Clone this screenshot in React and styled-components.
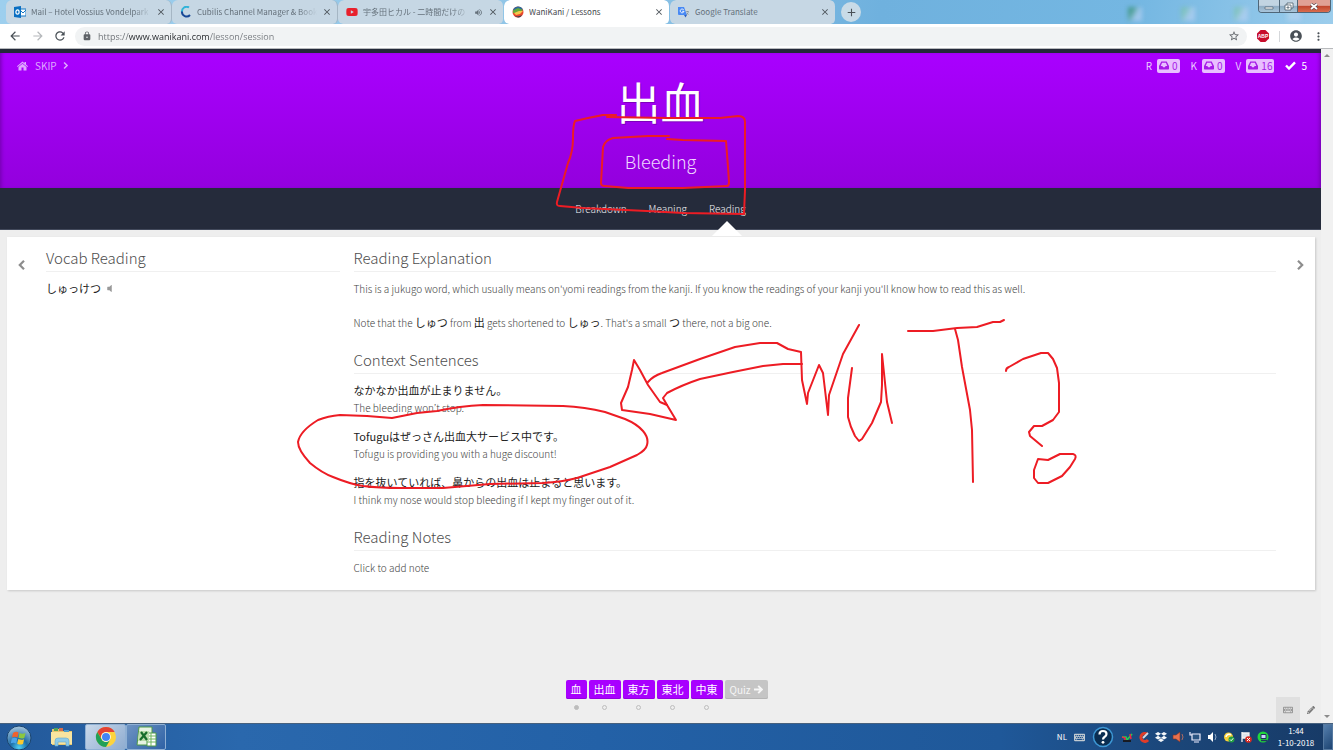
import React from "react";
import styled, { createGlobalStyle } from "styled-components";
import {
  FaVolumeOff, FaKeyboard, FaPencilAlt, FaDropbox, FaYoutube,
} from "react-icons/fa";
import {
  MdArrowBack, MdArrowForward, MdRefresh, MdLock, MdStarBorder,
  MdAccountCircle, MdMoreVert, MdClose, MdAdd, MdVolumeUp,
} from "react-icons/md";

const uiFont = '"Open Sans", "Noto Sans CJK JP", sans-serif';
const siteFont = '"Noto Sans CJK JP", sans-serif';

const GlobalStyle = createGlobalStyle`
  * { box-sizing: border-box; }
  body { margin: 0; background: #eee; }
  button { border: 0; padding: 0; background: none; font: inherit; color: inherit; cursor: pointer; }
  a { color: inherit; text-decoration: none; }
  h1, h2, p { margin: 0; font-weight: inherit; }
  svg { display: block; flex: none; }
`;

const Screen = styled.div`
  position: relative;
  display: flex;
  flex-direction: column;
  min-height: 100vh;
  font-family: ${siteFont};
  font-weight: 300;
`;

/* ---- browser ---- */

const TabStrip = styled.div`
  position: relative;
  display: flex;
  height: 24px;
  padding-left: 6px;
  background: linear-gradient(100deg, #9dcfee 0, #8fc4e6 45%, #6fb1de 66%, #74b7e2 85%, #9ccdec 100%);
  font: 8px/24px ${siteFont};
`;
const Tab = styled.div`
  display: flex;
  align-items: center;
  flex: 0 1 166px;
  min-width: 0;
  gap: 5px;
  padding: 0 5px 0 8px;
  border-radius: 6px 6px 5px 5px;
  background: ${(p) => (p.$active ? "#fff" : "#c6d7e4")};
  color: ${(p) => (p.$active ? "#45494d" : "#65717b")};
  border-right: 1px solid ${(p) => (p.$line ? "#a5b6c4" : "transparent")};
  background-clip: padding-box;
`;
const TabTitle = styled.button`
  flex: 1;
  min-width: 0;
  overflow: hidden;
  white-space: nowrap;
  text-align: left;
  ${(p) => p.$fade && "mask-image: linear-gradient(90deg, #000 85%, transparent);"}
`;
const IconButton = styled.button`
  display: grid;
  place-items: center;
  flex: none;
  width: ${(p) => p.$w || 10}px;
  height: ${(p) => p.$h || 20}px;
  color: ${(p) => p.$color || "#4a5157"};
`;
const NewTab = styled(IconButton)`
  align-self: center;
  margin-left: 5px;
  border-radius: 50%;
  background: #c9dbe7;
`;
const DesktopGhosts = styled.div`
  display: flex;
  align-items: center;
  gap: 39px;
  margin-left: auto;
  padding: 4px 32px 0 0;
  filter: blur(2px);
`;
const Ghost = styled.span`
  width: 14px;
  height: 14px;
  background: linear-gradient(120deg, ${(p) => p.$c} 25%, #bcd3f4 60%);
  opacity: 0.6;
`;
const WindowControls = styled.div`
  position: absolute;
  top: 0;
  right: 2px;
  display: flex;
  height: 13px;
  border: 1px solid #4f6678;
  border-top: 0;
  border-radius: 0 0 4px 4px;
  overflow: hidden;
`;
const WindowButton = styled.button`
  display: grid;
  place-items: center;
  width: ${(p) => p.$w}px;
  border-left: ${(p) => (p.$first ? "0" : "1px solid #4f6678")};
  background: ${(p) => (p.$close
    ? "linear-gradient(#e0a094 0 45%, #c0442b 50%, #d96d4e)"
    : "linear-gradient(#c2d4e2 0 45%, #8eabc2 50%, #a9c5db)")};
`;

const Toolbar = styled.div`
  display: flex;
  align-items: center;
  height: 25px;
  padding: 0 4px;
  background: #fff;
  border-bottom: 1px solid #b8babd;
`;
const AddressBar = styled.label`
  display: flex;
  align-items: center;
  flex: 1;
  height: 19px;
  margin: 0 8px 0 4px;
  padding: 0 7px;
  gap: 6px;
  border-radius: 10px;
  background: #f1f3f4;
  color: #5f6368;
`;
const Address = styled.input`
  flex: 1;
  min-width: 0;
  height: 19px;
  padding: 0;
  border: 0;
  outline: 0;
  font: 9px/19px ${uiFont};
  color: transparent;
  background: linear-gradient(90deg, #6a6e73 31px, #25282c 31px 112px, #74787d 112px);
  background-clip: text;
  -webkit-background-clip: text;
`;
const Abp = styled.span`
  width: 12px;
  height: 12px;
  clip-path: polygon(30% 0, 70% 0, 100% 30%, 100% 70%, 70% 100%, 30% 100%, 0 70%, 0 30%);
  background: #c70d2c;
  color: #fff;
  font: bold 5px/12px "Liberation Sans", sans-serif;
  text-align: center;
`;
const Divider = styled.span`
  width: 1px;
  height: 11px;
  margin: 0 5px 0 8px;
  background: #d5d7da;
`;

/* ---- page ---- */

const Viewport = styled.div`
  display: flex;
  flex: 1;
`;
const Page = styled.div`
  display: flex;
  flex-direction: column;
  flex: 1;
  min-width: 0;
  border-top: 4px solid #232939;
  background: #eee;
`;
const ScrollTrack = styled.div`
  display: flex;
  flex-direction: column;
  justify-content: space-between;
  align-items: center;
  width: 12px;
  padding: 5px 0;
  background: #f1f1f1;
`;
const ScrollArrow = styled.span`
  border: 3px solid transparent;
  border-top-width: ${(p) => (p.$up ? 0 : 3)}px;
  border-bottom-width: ${(p) => (p.$up ? 3 : 0)}px;
  border-${(p) => (p.$up ? "bottom" : "top")}-color: #8b8b8b;
`;
const Header = styled.header`
  height: 135px;
  background: linear-gradient(#a900ff, #9300dd);
  box-shadow: inset 4px 0 4px -3px #6f00a8, inset -4px 0 4px -3px #6f00a8;
  color: #fff;
  text-align: center;
`;
const HeaderBar = styled.div`
  display: flex;
  justify-content: space-between;
  height: 25px;
  padding: 0 14px 0 17px;
  font: 10px/25px ${siteFont};
  color: #dfa8ff;
`;
const Row = styled.div`
  display: flex;
  align-items: center;
  gap: ${(p) => p.$gap}px;
`;
const Skip = styled.a`
  display: flex;
  align-items: center;
  gap: 5px;
`;
const Stat = styled.span`
  display: flex;
  align-items: center;
  gap: 5px;
  color: ${(p) => (p.$bright ? "#fff" : "#ecccff")};
`;
const StatCount = styled.span`
  display: flex;
  align-items: center;
  gap: 3px;
  height: 14px;
  padding: 0 2px;
  border-radius: 2px;
  background: #e8bfff;
  color: #a61be8;
  line-height: 14px;
`;
const Word = styled.h1`
  font-size: 44px;
  font-weight: 400;
  line-height: 46px;
  text-shadow: 1px 1px 0 #7d00bd;
`;
const Meaning = styled.p`
  padding-top: 22px;
  font-size: 18px;
  line-height: 30px;
  color: #f0d8ff;
`;
const Steps = styled.nav`
  display: flex;
  justify-content: center;
  gap: 22px;
  height: 42px;
  background: #252b3b;
  border-bottom: 1px solid #42495b;
  font-size: 10px;
  line-height: 42px;
  color: #f0f1f3;
`;
const Step = styled.a`
  position: relative;
  ${(p) => p.$current && `
    &::after {
      content: "";
      position: absolute;
      left: 50%;
      bottom: -7px;
      border: 15px solid transparent;
      border-top: 0;
      border-bottom-color: #fff;
      translate: -50% 0;
    }
  `}
`;
const Card = styled.main`
  display: flex;
  align-items: flex-start;
  margin: 7px 6px 0 7px;
  padding: 8px 0 13px;
  background: #fff;
  box-shadow: 1px 1px 2px #c8c8c8;
  color: #444;
  font-size: 10px;
  line-height: 18px;
`;
const Pager = styled.button`
  display: grid;
  place-items: center;
  flex: none;
  width: 39px;
  height: 40px;
  padding-right: ${(p) => (p.$next ? 0 : 9)}px;
  padding-left: ${(p) => (p.$next ? 9 : 0)}px;
  color: #8d8d8d;
`;
const Columns = styled.div`
  display: grid;
  grid-template-columns: 7fr 22fr;
  gap: 14px;
  flex: 1;
`;
const Section = styled.section`
  & + & { margin-top: 15px; }
`;
const Title = styled.h2`
  margin-bottom: 8px;
  border-bottom: 1px solid #f0f0f0;
  font-size: 15px;
  line-height: 26px;
  color: #4d4d4d;
`;
const Paragraph = styled.p`
  & + & { margin-top: 16px; }
`;
const Japanese = styled.span`
  font-size: 11px;
  font-weight: 400;
  line-height: 11px;
  color: #222;
`;
const Reading = styled.p`
  display: flex;
  align-items: center;
  gap: 4px;
  color: #222;
  font-size: 11px;
  font-weight: 400;
  line-height: 16px;
`;
const Sentence = styled.div`
  & + & { margin-top: 11px; }
`;
const SentenceJa = styled.p`
  font-size: 11px;
  font-weight: 400;
  line-height: 17px;
  color: #222;
`;
const Footer = styled.footer`
  display: grid;
  grid-template-columns: 1fr auto 1fr;
  align-items: end;
  margin-top: auto;
  padding-left: 12px;
`;
const Lessons = styled.div`
  grid-column: 2;
  display: flex;
  align-items: flex-start;
  gap: 2px;
  padding-bottom: 13px;
`;
const Lesson = styled.div`
  display: flex;
  flex-direction: column;
  align-items: center;
  gap: 6px;
`;
const LessonButton = styled.button`
  display: flex;
  align-items: center;
  gap: 3px;
  height: 19px;
  padding: 0 5px;
  border-radius: 2px;
  background: ${(p) => (p.$quiz ? "#c5c5c5" : "#a800ff")};
  box-shadow: inset 0 -1px 0 ${(p) => (p.$quiz ? "#b5b5b5" : "#9300dd")};
  color: ${(p) => (p.$quiz ? "#f6f6f6" : "#fff")};
  font-size: ${(p) => (p.$quiz ? 10 : 11)}px;
  font-weight: 400;
  line-height: 19px;
`;
const Dot = styled.span`
  width: 5px;
  height: 5px;
  border: 1px solid #bdbdbd;
  border-radius: 50%;
  background: ${(p) => (p.$on ? "#bdbdbd" : "transparent")};
`;
const Tools = styled.div`
  display: flex;
  justify-content: flex-end;
  color: #888;
`;
const Tool = styled(IconButton)`
  background: ${(p) => (p.$shade ? "#e0e0e0" : "none")};
`;

/* ---- taskbar ---- */

const Taskbar = styled.div`
  display: flex;
  align-items: center;
  height: 27px;
  border-top: 1px solid #47617e;
  background: linear-gradient(90deg, #23599a, #2a68ad 18%, #2361a7 45%, #1f5899 75%, #1b4679 88%, #173a66);
  color: #fff;
  font: 8px/12px ${siteFont};
`;
const TaskButton = styled.button`
  display: grid;
  place-items: center;
  width: ${(p) => p.$w}px;
  height: 26px;
  border-radius: 2px;
  border: 1px solid ${(p) => (p.$state ? "#8fb0d4" : "transparent")};
  background: ${(p) => ({
    active: "linear-gradient(135deg, #c9d8ea, #8eacd0)",
    open: "linear-gradient(135deg, #6d93c2, #2f62a5)",
  }[p.$state] || "none")};
`;
const Tray = styled.div`
  display: flex;
  align-items: center;
  gap: 7px;
  margin-left: auto;
`;
const Clock = styled.div`
  width: 40px;
  text-align: center;
  white-space: nowrap;
`;
const ShowDesktop = styled.button`
  width: 10px;
  height: 26px;
  border: 1px solid #55789f;
  background: linear-gradient(135deg, #557fad, #1d4472);
`;
const Markup = styled.svg`
  position: absolute;
  inset: 0;
  width: 100%;
  height: 100%;
  pointer-events: none;
  fill: none;
  stroke: #ed1c24;
  stroke-width: 2;
  stroke-linecap: round;
  stroke-linejoin: round;
`;

const Chevron = ({ size, left }) => (
  <svg width={size} height={size} viewBox="0 0 10 10" fill="none" stroke="currentColor" strokeWidth="2.200">
    <path d={left ? "M7 .8 2.800 5 7 9.200" : "M3 .8 7.200 5 3 9.200"} />
  </svg>
);
const HomeIcon = () => (
  <svg width="11" height="10" viewBox="0 0 11 10" fill="currentColor">
    <path d="M5.500.5 7.500 2.200V1H9v2.500L11 5.200l-.6.7-4.900-4-4.900 4L0 5.200z" />
    <path d="m5.500 2.800 4 3.300V9.500H6.500v-3h-2v3h-3V6.100z" />
  </svg>
);
const InboxIcon = () => (
  <svg width="10" height="9" viewBox="0 0 10 9" fill="currentColor" fillRule="evenodd">
    <path d="M2.300.5h5.400L10 5v2.800q0 .7-.7.7H.7q-.7 0-.7-.7V5zM3.100 1.800 1.700 5h1.700l.7 1.300h1.800L6.600 5h1.700L6.900 1.800z" />
  </svg>
);
const CheckIcon = () => (
  <svg width="11" height="9" viewBox="0 0 11 9" fill="none" stroke="currentColor" strokeWidth="2.400">
    <path d="m1 4.500 3 3L10 1.300" />
  </svg>
);
const ArrowIcon = () => (
  <svg width="9" height="9" viewBox="0 0 9 9" fill="none" stroke="currentColor" strokeWidth="1.900">
    <path d="M0 4.500h7.500M4.200.8 7.900 4.500 4.200 8.200" />
  </svg>
);
const OutlookIcon = () => (
  <svg width="12" height="12" viewBox="0 0 12 12">
    <path d="M6 3h6v7H6z" fill="#fff" stroke="#1477c6" />
    <path d="m6 4 3 3 3-3" fill="none" stroke="#1477c6" />
    <path d="M0 1 7 0v12L0 11z" fill="#0a6fc2" />
    <ellipse cx="3.500" cy="6" rx="1.600" ry="2.100" fill="none" stroke="#fff" strokeWidth="1.200" />
  </svg>
);
const CubilisIcon = () => (
  <svg width="12" height="12" viewBox="0 0 12 12" fill="none" strokeWidth="2">
    <path d="M9 1.500A4.600 4.600 0 0 0 2 6" stroke="#31b3d8" />
    <path d="M2 5.500A4.600 4.600 0 0 0 10 9" stroke="#174796" />
  </svg>
);
const WaniIcon = () => (
  <svg width="12" height="12" viewBox="0 0 12 12">
    <circle cx="6" cy="6" r="5.500" fill="#e8452c" />
    <path d="M.8 4.500A5.500 5.500 0 0 1 11 3.500L5 5z" fill="#2c6b9c" />
    <path d="M1 4.500 6 2l5 2-5 3-5 0z" fill="#67a83a" />
    <path d="m2 7 5-2 4 0-3 3-4 1z" fill="#f6c64b" />
    <path d="M2 9.500q4 2 8-.5-2 3-4 2.500T2 9.500" fill="#27425f" />
  </svg>
);
const TranslateIcon = () => (
  <svg width="12" height="12" viewBox="0 0 12 12">
    <path d="M5 3h6v8H7z" fill="#cfd8dd" />
    <path d="M0 1h6l3 8H1q-1 0-1-1z" fill="#4889f4" />
    <path d="m6 9 3 0-1.500 2.500z" fill="#2a5fc4" />
    <path d="M5.800 4A1.900 1.900 0 1 0 6 5.300H4.200" fill="none" stroke="#fff" strokeWidth=".9" />
    <path d="M8 5.500h3M9.500 5v1M10.500 6 8.500 9M8.700 7l2 1.500" stroke="#7b8a92" strokeWidth=".6" />
  </svg>
);
const StartOrb = () => (
  <svg width="26" height="26" viewBox="0 0 26 26">
    <defs>
      <radialGradient id="orb" cx=".5" cy=".9" r=".9">
        <stop offset="0" stopColor="#4fd0f5" /><stop offset=".4" stopColor="#1c6ba6" /><stop offset="1" stopColor="#a9c7de" />
      </radialGradient>
    </defs>
    <circle cx="13" cy="13" r="12" fill="url(#orb)" stroke="#1b4570" />
    <path d="M7 8q3-2 5.500-.5l-1 5Q8.500 11 6 12.500z" fill="#f0622d" />
    <path d="M13.500 8q3 1.500 6 0l-1.200 5q-3 1.200-5.800-.2z" fill="#8cc83f" />
    <path d="M5.800 13.500q3-1.500 5.500 0l-1.200 5Q7.500 17 4.700 18.500z" fill="#4aa5ea" />
    <path d="M12.300 14q3 1.400 5.800.2L17 19q-3 1.300-5.800-.3z" fill="#fcc92e" />
  </svg>
);
const ExplorerIcon = () => (
  <svg width="24" height="22" viewBox="0 0 24 22">
    <path d="M2 3h7l1 2h12v14H2z" fill="#e5c66d" />
    <path d="M4 2h4v3H4z" fill="#52a25c" /><path d="M9 2h4v3H9z" fill="#d56d4d" /><path d="M14 4h5v3h-5z" fill="#4e9bc9" />
    <path d="M1 6h21v12H1z" fill="#f8e4a0" />
    <path d="M5 20v-5q0-3 3-3h8q3 0 3 3v5h-3v-4H8v4z" fill="#8ecbe9" stroke="#62a9cf" strokeWidth=".6" />
  </svg>
);
const ChromeIcon = () => (
  <svg width="22" height="22" viewBox="0 0 22 22">
    <circle cx="11" cy="11" r="10" fill="#fdd33c" />
    <path d="M2.300 6A10 10 0 0 1 19.700 6H11a5 5 0 0 0-4.300 7.500z" fill="#e24234" />
    <path d="M2.300 6A10 10 0 0 0 11 21l4.300-7.500a5 5 0 0 1-8.600 0z" fill="#21a057" />
    <circle cx="11" cy="11" r="4.800" fill="#fff" /><circle cx="11" cy="11" r="4" fill="#4285f4" />
  </svg>
);
const ExcelIcon = () => (
  <svg width="22" height="22" viewBox="0 0 22 22">
    <path d="M4 1h13v18H2z" fill="#e7f3e3" stroke="#4f9a49" />
    <path d="M12 7h9v13h-9z" fill="#fff" stroke="#4f9a49" />
    <path d="M12 10h9M12 13h9M12 16h9M16 7v13" stroke="#6eb45c" />
    <path d="M4 5h10v10H3z" fill="#bcdcac" />
    <path d="m6 6 6 8M12 6l-7 8" stroke="#176c2b" strokeWidth="2.200" />
  </svg>
);
const HelpIcon = () => (
  <svg width="22" height="22" viewBox="0 0 22 22">
    <circle cx="11" cy="11" r="9.500" fill="#0b2e52" stroke="#3d97d4" strokeWidth="1.500" />
    <path d="M7.500 8.500q0-3.500 3.500-3.500t3.500 3q0 1.800-2 3-1.500 1-1.500 2.500" fill="none" stroke="#fff" strokeWidth="2.200" />
    <circle cx="11" cy="16.300" r="1.400" fill="#fff" />
  </svg>
);
const trayIcons = [
  <><path d="M1 6h4l1 3 5-6" fill="none" stroke="#24d04d" strokeWidth="1.600" /><path d="M1 6l3 1v3M9 3l1 5" stroke="#ee2b46" strokeWidth="1.500" fill="none" /><path d="M2 10h8" stroke="#181b22" strokeWidth="2" /></>,
  <><path d="M9 3a4 4 0 1 0 1 6" fill="none" stroke="#e03c28" strokeWidth="3" /><path d="m5 7 5-5" stroke="#d7dbe2" strokeWidth="1.800" /></>,
  null,
  <><path d="M1 4h3l4-3v10L4 8H1z" fill="#e8714d" stroke="#7d2f25" strokeWidth=".6" /><path d="M10 3q2 3 0 6" fill="none" stroke="#b06a60" /></>,
  <><path d="M3 3h8v6H3z" fill="#2b5583" stroke="#eef" strokeWidth="1.200" /><path d="M1 1v3h2M5 11h5" stroke="#eef" strokeWidth="1.200" fill="none" /></>,
  <><path d="M2 4h2l3-3v10L4 8H2z" fill="#fff" /><path d="M9 3q2 3 0 6" fill="none" stroke="#8fa9c8" /></>,
  <><circle cx="5.500" cy="6" r="4.500" fill="#f4cf38" /><path d="M3 6a3 3 0 0 1 5-2" stroke="#fff" fill="none" strokeWidth="1.500" /><circle cx="8.500" cy="8.500" r="3" fill="#24a044" /><path d="m7 8.500 1.200 1.200 2-2.400" stroke="#fff" fill="none" /></>,
  <><path d="M2 1v10M2 2h7v5H2" stroke="#f4f4f4" fill="#dfe5ed" strokeWidth="1.300" /><circle cx="8.500" cy="8.500" r="3.300" fill="#d92a22" /><path d="m7 7 3 3m0-3-3 3" stroke="#fff" /></>,
  <><circle cx="6" cy="6" r="5.500" fill="#20d73c" /><path d="M4 3.500h5v4H4z" fill="#cbd7ff" stroke="#23325f" /><path d="M4 9.500h6" stroke="#23325f" strokeWidth="1.400" /></>,
];

const tabs = [
  { title: "Mail – Hotel Vossius Vondelpark", icon: <OutlookIcon />, fade: true, line: true },
  { title: "Cubilis Channel Manager & Book", icon: <CubilisIcon />, fade: true, line: true },
  { title: "宇多田ヒカル - 二時間だけの", icon: <FaYoutube size={12} color="#e8202c" />, fade: true, sound: true },
  { title: "WaniKani / Lessons", icon: <WaniIcon />, active: true },
  { title: "Google Translate", icon: <TranslateIcon /> },
];
const stats = [["R", 0], ["K", 0], ["V", 16]];
const sentences = [
  ["なかなか出血が止まりません。", "The bleeding won’t stop."],
  ["Tofuguはぜっさん出血大サービス中です。", "Tofugu is providing you with a huge discount!"],
  ["指を抜いていれば、鼻からの出血は止まると思います。", "I think my nose would stop bleeding if I kept my finger out of it."],
];
const lessons = ["血", "出血", "東方", "東北", "中東"];

const strokes = [
  "M616 115H603L588 118 575 121Q573 125 573 138 573 152 568 163L557 202Q556 206 560 206L583 208 647 211 683 213 744 214 745 190 745 122Q745 116 738 116L720 118 667 118 607 117",
  "M669 136 648 136 613 138Q605 140 603 147L602 165 601 183Q601 186 605 186L628 188H683L727 186Q729 186 729 182L728 167 726 141 683 140 667 139",
  "M392 418 367 416 340 415Q328 416 318 420 300 431 298 442 298 450 310 463 322 473 333 477 350 484 363 486 380 488 400 488L443 488 490 484 543 483Q562 482 577 478L610 467 637 455Q646 450 647 445 649 438 643 431 637 424 625 419L605 412Q585 407 563 406L483 405Q460 406 437 411L417 413 392 418",
  "M634 360 640 370 648 385 660 402 667 405 676 420 650 414 622 410 621 403 628 387 632 370Z",
  "M648 382Q653 376 662 373L700 359 735 347 760 343H777L788 349 801 352 802 380 807 404 808 393 819 365 823 373 828 415 829 395 843 354 859 325",
  "M802 364H783L763 366 733 372 700 379Q682 385 667 393L663 398 667 405",
  "M852 368 848 398V417Q850 426 855 436L859 441 862 439 872 423 881 402 882 385 882 354 887 402 892 423",
  "M908 331H933L957 328 977 327 993 322 1000 322 1004 320",
  "M955 329 958 340 962 367 970 410 972 430 973 482",
  "M1006 371Q1006 368 1009 367L1023 359 1041 353 1048 353 1053 359 1057 368 1059 383V412L1053 420 1042 426H1034L1029 432 1030 436 1042 446",
  "M1038 459 1048 460 1060 454 1073 454Q1077 455 1075 459L1070 467 1062 476 1048 483H1038L1034 478V470Z",
];

export default function App() {
  return (
    <Screen>
      <GlobalStyle />
      <TabStrip>
        {tabs.map((t) => (
          <Tab key={t.title} $active={t.active} $line={t.line}>
            {t.icon}
            <TabTitle $fade={t.fade}>{t.title}</TabTitle>
            {t.sound && <MdVolumeUp size={9} />}
            <IconButton aria-label="Close tab"><MdClose size={10} /></IconButton>
          </Tab>
        ))}
        <NewTab $w={20} aria-label="New tab"><MdAdd size={13} /></NewTab>
        <DesktopGhosts>
          <Ghost $c="#2b8a5b" /><Ghost $c="#7dc4a5" /><Ghost $c="#7dc4a5" /><Ghost $c="#b8d8ea" />
        </DesktopGhosts>
        <WindowControls>
          <WindowButton $w={20} $first aria-label="Minimize">
            <svg width="10" height="8"><path d="M1 5h8v2H1z" fill="#fff" stroke="#4d5d6b" strokeWidth=".7" /></svg>
          </WindowButton>
          <WindowButton $w={18} aria-label="Restore">
            <svg width="10" height="9" fill="#fff" stroke="#4d5d6b" strokeWidth=".8"><path d="M3 1h6v5H3z" /><path d="M1 3h6v5H1z" /><path d="M3 5h2v1H3z" /></svg>
          </WindowButton>
          <WindowButton $w={33} $close aria-label="Close">
            <svg width="10" height="9"><path d="m2 2 6 5M8 2 2 7" stroke="#5d4a50" strokeWidth="3" /><path d="m2 2 6 5M8 2 2 7" stroke="#fff" strokeWidth="1.800" /></svg>
          </WindowButton>
        </WindowControls>
      </TabStrip>
      <Toolbar>
        <IconButton $w={22} aria-label="Back"><MdArrowBack size={14} /></IconButton>
        <IconButton $w={23} $color="#b5b8bb" aria-label="Forward"><MdArrowForward size={14} /></IconButton>
        <IconButton $w={22} aria-label="Reload"><MdRefresh size={14} /></IconButton>
        <AddressBar>
          <MdLock size={10} />
          <Address aria-label="Address" defaultValue="https://www.wanikani.com/lesson/session" />
          <MdStarBorder size={12} />
        </AddressBar>
        <IconButton $w={16} aria-label="Adblock Plus"><Abp>ABP</Abp></IconButton>
        <Divider />
        <IconButton $w={22} aria-label="Profile"><MdAccountCircle size={14} /></IconButton>
        <IconButton $w={22} aria-label="Menu"><MdMoreVert size={13} /></IconButton>
      </Toolbar>

      <Viewport>
        <Page>
          <Header>
            <HeaderBar>
              <Row $gap={7}>
                <a href="#home" aria-label="Home"><HomeIcon /></a>
                <Skip href="#skip">SKIP <Chevron size={7} /></Skip>
              </Row>
              <Row $gap={11}>
                {stats.map(([k, n]) => (
                  <Stat key={k}>{k}<StatCount><InboxIcon />{n}</StatCount></Stat>
                ))}
                <Stat $bright><CheckIcon />5</Stat>
              </Row>
            </HeaderBar>
            <Word lang="ja">出血</Word>
            <Meaning>Bleeding</Meaning>
          </Header>
          <Steps>
            <Step href="#breakdown">Breakdown</Step>
            <Step href="#meaning">Meaning</Step>
            <Step href="#reading" $current>Reading</Step>
          </Steps>
          <Card>
            <Pager aria-label="Previous"><Chevron size={10} left /></Pager>
            <Columns>
              <Section>
                <Title>Vocab Reading</Title>
                <Reading>しゅっけつ <FaVolumeOff size={9} color="#999" /></Reading>
              </Section>
              <div>
                <Section>
                  <Title>Reading Explanation</Title>
                  <Paragraph>This is a jukugo word, which usually means on'yomi readings from the kanji. If you know the readings of your kanji you'll know how to read this as well.</Paragraph>
                  <Paragraph>
                    Note that the <Japanese>しゅつ</Japanese> from <Japanese>出</Japanese> gets shortened to <Japanese>しゅっ</Japanese>. That's a small <Japanese>つ</Japanese> there, not a big one.
                  </Paragraph>
                </Section>
                <Section>
                  <Title>Context Sentences</Title>
                  {sentences.map(([ja, en]) => (
                    <Sentence key={en}><SentenceJa lang="ja">{ja}</SentenceJa><p>{en}</p></Sentence>
                  ))}
                </Section>
                <Section>
                  <Title>Reading Notes</Title>
                  <button>Click to add note</button>
                </Section>
              </div>
            </Columns>
            <Pager $next aria-label="Next"><Chevron size={10} /></Pager>
          </Card>
          <Footer>
            <Lessons>
              {lessons.map((l, i) => (
                <Lesson key={l}><LessonButton>{l}</LessonButton><Dot $on={i === 0} /></Lesson>
              ))}
              <LessonButton $quiz>Quiz <ArrowIcon /></LessonButton>
            </Lessons>
            <Tools>
              <Tool $w={24} $h={26} $shade $color="#999" aria-label="Keyboard shortcuts"><FaKeyboard size={10} /></Tool>
              <Tool $w={21} $h={26} $color="#777" aria-label="Edit"><FaPencilAlt size={8} /></Tool>
            </Tools>
          </Footer>
        </Page>
        <ScrollTrack><ScrollArrow $up /><ScrollArrow /></ScrollTrack>
      </Viewport>

      <Taskbar>
        <TaskButton $w={38} aria-label="Start"><StartOrb /></TaskButton>
        <TaskButton $w={47} aria-label="Explorer"><ExplorerIcon /></TaskButton>
        <TaskButton $w={41} $state="active" aria-label="Chrome"><ChromeIcon /></TaskButton>
        <TaskButton $w={40} $state="open" aria-label="Excel"><ExcelIcon /></TaskButton>
        <Tray>
          <span>NL</span>
          <FaKeyboard size={11} color="#c3cbd2" />
          <HelpIcon />
          <Row $gap={5}>
            {trayIcons.map((icon, i) => (
              icon ? <svg key={i} width="12" height="12" viewBox="0 0 12 12">{icon}</svg> : <FaDropbox key={i} size={12} color="#f4f7fa" />
            ))}
          </Row>
          <Clock>1:44<br />1-10-2018</Clock>
          <ShowDesktop aria-label="Show desktop" />
        </Tray>
      </Taskbar>

      <Markup viewBox="0 0 1333 750" preserveAspectRatio="none">
        {strokes.map((d) => <path key={d} d={d} />)}
      </Markup>
    </Screen>
  );
}
